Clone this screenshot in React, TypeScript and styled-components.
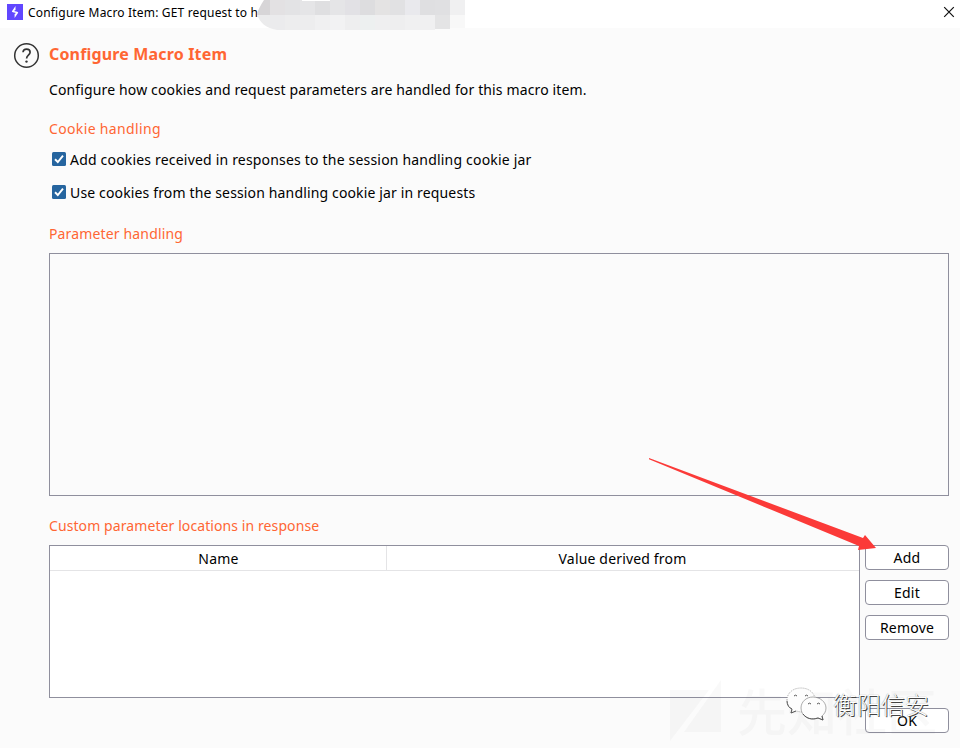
import React from "react";
import styled, { createGlobalStyle } from "styled-components";

const Global = createGlobalStyle`
  * { box-sizing: border-box; }
  body { margin: 0; background: #fbfbfb; }
`;

const Window = styled.div`
  position: relative;
  width: 960px;
  height: 748px;
  overflow: hidden;
  background: #fbfbfb;
  color: #000;
  font-family: "Noto Sans", "Open Sans", sans-serif;
  font-size: 14px;
`;

const TitleBar = styled.header`
  display: flex;
  align-items: center;
  height: 28px;
  padding: 0 5px 4px 7px;
  background: #fff;
`;

const AppIcon = styled.svg`
  width: 16px;
  height: 16px;
  margin-right: 5px;
`;

const Line = styled.span<{ $spacing?: number }>`
  white-space: nowrap;
  letter-spacing: ${(p) => p.$spacing ?? 0}px;
`;

const Title = styled(Line)`
  flex: 1;
  font-size: 12px;
`;

const CloseIcon = styled.svg`
  width: 12px;
  height: 12px;
`;

const Redaction = styled.svg`
  position: absolute;
  left: 257px;
  top: 0;
`;

const Body = styled.main`
  display: grid;
  grid-template-columns: 36px 900px;
  padding: 14px 11px 0 13px;
`;

const HelpIcon = styled.svg`
  width: 27px;
  height: 27px;
`;

const Content = styled.div`
  display: flex;
  flex-direction: column;
`;

const Heading = styled.h1`
  margin: 0;
  height: 25px;
  line-height: 25px;
  font-size: 16px;
  font-weight: 700;
  color: #ff6633;
`;

const Description = styled.p`
  margin: 10px 0 0;
  height: 25px;
  line-height: 25px;
`;

const Section = styled.h2<{ $top: number }>`
  margin: ${(p) => p.$top}px 0 0;
  height: 24px;
  line-height: 24px;
  font-size: 14px;
  font-weight: 400;
  color: #ff6633;
`;

const Option = styled.label`
  display: flex;
  align-items: center;
  height: 33px;
  padding-left: 3px;
  gap: 4px;
`;

const CheckBox = styled.svg`
  width: 14px;
  height: 14px;
  flex: none;
  margin-top: -2px;
`;

const Options = styled.div`
  margin-top: 2px;
`;

const ParameterPane = styled.div`
  height: 243px;
  margin-top: 7px;
  border: 1px solid #8f8f9d;
`;

const TableArea = styled.div`
  display: flex;
  gap: 5px;
  margin-top: 7px;
`;

const Table = styled.div`
  width: 811px;
  height: 153px;
  border: 1px solid #8f8f9d;
  background: #fff;
`;

const HeadRow = styled.div`
  display: grid;
  grid-template-columns: 337px 1fr;
  height: 25px;
  border-bottom: 1px solid #e4e4e6;
`;

const HeadCell = styled.div`
  display: flex;
  align-items: center;
  justify-content: center;
  & + & { box-shadow: inset 1px 0 #e4e4e6; margin-left: -1px; }
`;

const Actions = styled.div`
  display: flex;
  flex-direction: column;
  gap: 10px;
`;

const Button = styled.button`
  width: 84px;
  height: 25px;
  padding: 0;
  border: 1px solid #8f8f9d;
  border-radius: 4px;
  background: #fff;
  color: #000;
  font: inherit;
  letter-spacing: 0.2px;
  line-height: 23px;
`;

const Footer = styled.footer`
  display: flex;
  justify-content: flex-end;
  margin-top: 10px;
`;

const Overlay = styled.svg`
  position: absolute;
  left: 0;
  top: 0;
  pointer-events: none;
`;

const CommunityMark = styled.div`
  position: absolute;
  left: 737px;
  top: 675px;
  font: 500 50px/68px "Noto Sans CJK SC", sans-serif;
  color: rgba(110, 110, 120, 0.045);
  white-space: nowrap;
`;

const AccountName = styled.div`
  position: absolute;
  left: 833px;
  top: 687px;
  font: 300 24px/34px "Noto Sans CJK SC", sans-serif;
  color: #fff;
  text-shadow: 1px 1px 0 #444, 0 0 1px #777;
  white-space: nowrap;
`;

const topRow = ["#d7d5d7", "#e3e1e3", "#e3e3e5", "#e5e5e7", "#dfdfe1", "#e5e5e7", "#e2e1e5", "#dddddf", "#e4e3e3", "#e1e1e3", "#e9e9ed", "#dfdfe1", "#e0e0e2", "#f0f0f1"];
const bottomRow = ["#ebebec", "#ebebed", "#ededee", "#ededee", "#f0f0f1", "#f2f2f3", "#eeeeef", "#edf0f0", "#efeff0", "#eeeeef", "#f0f0f1", "#f0f0f1", "#e4e4e5", "#f8f8f8"];

function Checked({ children, spacing }: { children: string; spacing: number }) {
  return (
    <Option>
      <CheckBox viewBox="0 0 14 14">
        <rect width="14" height="14" rx="1.5" fill="#26659f" />
        <path d="M3 7.3 5.8 10 11 3.7" fill="none" stroke="#fff" strokeWidth="1.9" />
      </CheckBox>
      <Line $spacing={spacing}>{children}</Line>
    </Option>
  );
}

export default function App() {
  return (
    <Window>
      <Global />
      <TitleBar>
        <AppIcon viewBox="0 0 16 16">
          <rect width="16" height="16" fill="#6147ff" />
          <path d="M8.5 2 4.8 7.4 7.4 8.6V6.5L8.5 6Z M7.6 14 11.3 8.6 8.6 7.4V9.5L7.6 10Z" fill="#fff" />
          <path d="M5.3 7.3 10.8 8.7" stroke="#fff" strokeWidth="1.2" />
        </AppIcon>
        <Title $spacing={0.17}>Configure Macro Item: GET request to h</Title>
        <CloseIcon viewBox="0 0 12 12">
          <path d="m1.2 1.2 9.6 9.6m0-9.6-9.6 9.6" stroke="#111" strokeWidth="1.2" />
        </CloseIcon>
      </TitleBar>
      <Redaction width="208" height="30" viewBox="0 0 208 30">
        <clipPath id="smudge">
          <path d="M7 0H208V28H193V29H178V30H20C8 28 3 22 0 15 1 9 4 5 7 0Z" />
        </clipPath>
        <g clipPath="url(#smudge)" shapeRendering="crispEdges">
          {topRow.map((c, i) => (
            <rect key={c + i} x={i * 15 - 2} width="15" height="15" fill={c} />
          ))}
          {bottomRow.map((c, i) => (
            <rect key={c + i} x={i * 15 - 2} y="15" width="15" height="15" fill={c} />
          ))}
          <rect x="45" width="28" height="1" fill="#fff" />
        </g>
      </Redaction>
      <Body>
        <HelpIcon viewBox="0 0 27 27">
          <circle cx="13.5" cy="13.5" r="11.8" fill="none" stroke="#333" strokeWidth="1.5" />
          <path d="M10 10.3C10.2 8 11.8 7.2 13.6 7.2c2 0 3.5 1.1 3.5 3 0 2.9-3.5 2.9-3.5 6.2" fill="none" stroke="#333" strokeWidth="1.7" />
          <circle cx="13.5" cy="19.6" r="1.2" fill="#333" />
        </HelpIcon>
        <Content>
          <Heading><Line $spacing={0.16}>Configure Macro Item</Line></Heading>
          <Description><Line $spacing={0.135}>Configure how cookies and request parameters are handled for this macro item.</Line></Description>
          <Section $top={15}><Line $spacing={0.35}>Cookie handling</Line></Section>
          <Options>
            <Checked spacing={0.19}>Add cookies received in responses to the session handling cookie jar</Checked>
            <Checked spacing={0.145}>Use cookies from the session handling cookie jar in requests</Checked>
          </Options>
          <Section $top={13}><Line $spacing={0.15}>Parameter handling</Line></Section>
          <ParameterPane />
          <Section $top={18}><Line $spacing={0.09}>Custom parameter locations in response</Line></Section>
          <TableArea>
            <Table>
              <HeadRow>
                <HeadCell><Line $spacing={0.25}>Name</Line></HeadCell>
                <HeadCell><Line $spacing={0.17}>Value derived from</Line></HeadCell>
              </HeadRow>
            </Table>
            <Actions>
              <Button>Add</Button>
              <Button>Edit</Button>
              <Button>Remove</Button>
            </Actions>
          </TableArea>
          <Footer><Button>OK</Button></Footer>
        </Content>
      </Body>
      <CommunityMark>先知社区</CommunityMark>
      <Overlay width="960" height="748" viewBox="0 0 960 748">
        <path d="M649 458 863 538 865 535 876 548 858 550 859 546 649 459.2Z" fill="#fb3a38" />
        <path d="M670 690H709L670 741ZM721 680V732H684Z" fill="#6e6e78" fillOpacity=".045" />
        <g fill="#fdfdfd" stroke="#888" strokeWidth=".7">
          <path d="M787 700c0-7 6-12 14-12s14 5 14 12-6 12-14 12l-5-1-5 2 1-4c-3-2-5-5-5-9Z" strokeDasharray="1 1" />
          <path d="M801 708c0-6 5-11 12-11s13 5 13 11c0 4-2 6-4 8l1 4-5-2c-9 3-17-2-17-10Z" />
        </g>
        <path d="M787 701c0 4 2 7 5 8l-1 4 5-2M803 714c4 5 9 6 15 4l5 2-1-4" fill="none" stroke="#555" />
        <path d="M794 696a2 2 0 0 1 3 0m8 0a2 2 0 0 1 3 0m0 8a2 2 0 0 1 3 0m6 0a2 2 0 0 1 3 0" fill="none" stroke="#555" />
      </Overlay>
      <AccountName>衡阳信安</AccountName>
    </Window>
  );
}
